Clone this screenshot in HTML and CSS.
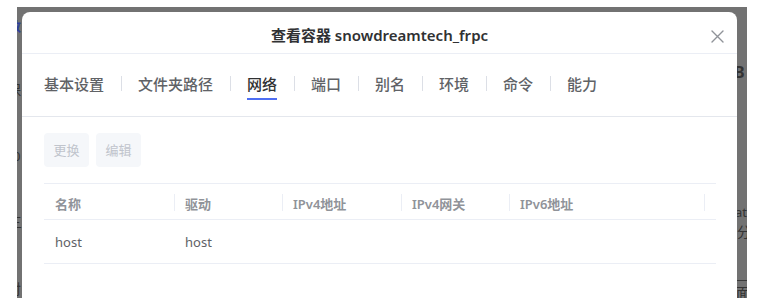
FILE: index.html
```html
<!DOCTYPE html>
<html lang="zh-CN">
<head>
<meta charset="utf-8">
<title>查看容器</title>
<link rel="stylesheet" href="styles.css">
</head>
<body>
<div class="page">
  <span class="frag frag-blue f-l1">数</span>
  <span class="frag f-l2">保</span>
  <span class="frag f-l3">0</span>
  <span class="frag f-l4">三</span>
  <span class="frag f-l5">封</span>
  <span class="frag f-r1">B</span>
  <span class="frag f-r2">at</span>
  <span class="frag f-r3">分</span>
  <span class="frag-line"></span>
  <span class="frag f-r4">面</span>

  <div class="dialog">
    <header class="dlg-head">
      <span></span>
      <span class="dlg-title">查看容器 snowdreamtech_frpc</span>
      <button class="close" aria-label="关闭">
        <svg width="13" height="13" viewBox="0 0 13 13"><path d="M1 1 L12 12 M12 1 L1 12" stroke="#909399" stroke-width="1.4" fill="none" stroke-linecap="round"/></svg>
      </button>
    </header>

    <nav class="tabs">
      <span class="tab">基本设置</span><span class="tab-sep"></span>
      <span class="tab">文件夹路径</span><span class="tab-sep"></span>
      <span class="tab active">网络</span><span class="tab-sep"></span>
      <span class="tab">端口</span><span class="tab-sep"></span>
      <span class="tab">别名</span><span class="tab-sep"></span>
      <span class="tab">环境</span><span class="tab-sep"></span>
      <span class="tab">命令</span><span class="tab-sep"></span>
      <span class="tab">能力</span>
    </nav>

    <section class="content">
      <div class="toolbar">
        <button class="btn" disabled>更换</button>
        <button class="btn" disabled>编辑</button>
      </div>
      <div class="table">
        <div class="th">名称</div>
        <div class="th sep">驱动</div>
        <div class="th sep">IPv4地址</div>
        <div class="th sep">IPv4网关</div>
        <div class="th sep">IPv6地址</div>
        <div class="th sep"></div>
        <div class="td">host</div>
        <div class="td">host</div>
        <div class="td"></div>
        <div class="td"></div>
        <div class="td"></div>
        <div class="td"></div>
      </div>
    </section>
  </div>
</div>
</body>
</html>
```

FILE: styles.css
```css
html, body {
  margin: 0;
  padding: 0;
  background: #ffffff;
}

body {
  font-family: "Noto Sans", "Noto Sans CJK SC", sans-serif;
  color: #303133;
}

.page {
  position: relative;
  box-sizing: border-box;
  margin: 7px 0 0 17px;
  width: 730px;
  height: 291px;
  padding: 5px 0 0 5px;
  background: #727272;
  overflow: hidden;
}

/* fragments of the page behind the overlay */
.frag {
  position: absolute;
  font-size: 14px;
  line-height: 1;
  color: #333333;
}
.frag-blue { color: #2f3f9c; font-weight: 700; }
.f-l1 { top: 13px; left: -9px; font-size: 13px; }
.f-l2 { top: 76px; left: -10px; }
.f-l3 { top: 143px; left: -4px; font-size: 13px; }
.f-l4 { top: 208px; left: -9px; }
.f-l5 { top: 275px; left: -10px; }
.f-r1 { top: 57px; left: 717px; font-size: 16px; font-weight: 700; }
.f-r2 { top: 199px; left: 718px; font-size: 13px; }
.f-r3 { top: 218px; left: 720px; }
.f-r4 { top: 279px; left: 719px; }
.frag-line {
  position: absolute;
  top: 273px;
  left: 720px;
  width: 10px;
  height: 1px;
  background: #3a3a3a;
}

.dialog {
  position: relative;
  width: 715px;
  height: 400px;
  background: #ffffff;
  border-radius: 8px 8px 0 0;
}

.dlg-head {
  display: grid;
  grid-template-columns: 1fr auto 1fr;
  align-items: center;
  box-sizing: border-box;
  height: 42px;
  padding-top: 5px;
  border-bottom: 1px solid #ebeef5;
}

.dlg-title {
  font-size: 15px;
  font-weight: 600;
  line-height: 22px;
  color: #303133;
}

.close {
  justify-self: end;
  margin: 3px 13px 0 0;
  padding: 0;
  border: 0;
  background: none;
  display: flex;
  width: 13px;
  height: 13px;
}

.tabs {
  display: flex;
  align-items: flex-start;
  padding: 19px 22px 16px;
  border-bottom: 1px solid #e4e7ed;
}

.tab {
  font-size: 15px;
  line-height: 22px;
  font-weight: 500;
  color: #606266;
  padding-bottom: 3px;
  border-bottom: 2px solid transparent;
  white-space: nowrap;
}

.tab.active {
  color: #303133;
  border-bottom-color: #4e6ef2;
}

.tab-sep {
  width: 1px;
  height: 15px;
  margin: 3px 16.5px 0;
  background: #dcdfe6;
}

.content {
  padding: 16px 21px 0 22px;
}

.toolbar {
  display: flex;
  gap: 7px;
}

.btn {
  height: 34px;
  padding: 0 9.5px;
  border: 0;
  border-radius: 4px;
  background: #f5f7fa;
  color: #c0c4cc;
  font-family: inherit;
  font-size: 13px;
  line-height: 34px;
}

.table {
  margin-top: 16px;
  display: grid;
  grid-template-columns: 130px 108px 119px 108px 195px 1fr;
  border-top: 1px solid #ebeef5;
}

.th {
  box-sizing: border-box;
  height: 36px;
  padding: 4px 0 0 11px;
  display: flex;
  align-items: center;
  font-size: 13px;
  font-weight: 600;
  color: #909399;
  border-bottom: 1px solid #ebeef5;
  white-space: nowrap;
}

.th.sep {
  background: linear-gradient(#ebeef5, #ebeef5) left 10px / 1px 17px no-repeat;
}

.td {
  box-sizing: border-box;
  height: 44px;
  padding-left: 11px;
  display: flex;
  align-items: center;
  font-size: 13px;
  color: #606266;
  border-bottom: 1px solid #ebeef5;
}
```
